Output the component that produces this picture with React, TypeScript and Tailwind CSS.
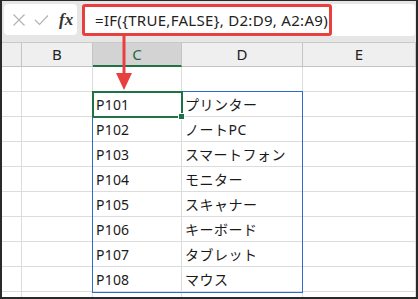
import React from "react";

const COLS = [
  { key: "hdr", label: "", w: "w-[20px]" },
  { key: "B", label: "B", w: "w-[71px]" },
  { key: "C", label: "C", w: "w-[89px]" },
  { key: "D", label: "D", w: "w-[121px]" },
  { key: "E", label: "E", w: "flex-1" },
];

const ROWS: [string, string][] = [
  ["", ""],
  ["P101", "プリンター"],
  ["P102", "ノートPC"],
  ["P103", "スマートフォン"],
  ["P104", "モニター"],
  ["P105", "スキャナー"],
  ["P106", "キーボード"],
  ["P107", "タブレット"],
  ["P108", "マウス"],
  ["", ""],
];

const FONT = "font-['Noto_Sans','Noto_Sans_CJK_JP',sans-serif]";

export default function App() {
  return (
    <div className={`relative w-[418px] h-[299px] bg-[#2a2a2a] pl-[2px] pt-[1px] pr-[2px] pb-[2px] ${FONT}`}>
      <div className="flex flex-col h-full bg-white overflow-hidden">
        {/* formula bar */}
        <div className="h-[41px] shrink-0 bg-[#e6e6e6] flex items-start pt-[3px] pl-[2px] pr-[1px] gap-[5px]">
          <div className="w-[73px] h-[31px] bg-white rounded-[4px] flex items-center pl-[8px] gap-[8px]">
            <svg width="14" height="14" viewBox="0 0 14 14">
              <path d="M1.5 1.5 L12.5 12.5 M12.5 1.5 L1.5 12.5" stroke="#b3b3b3" strokeWidth="1.2" fill="none" />
            </svg>
            <svg width="15" height="12" viewBox="0 0 15 12">
              <path d="M1 6 L5.5 10.5 L14 1.5" stroke="#b3b3b3" strokeWidth="1.2" fill="none" />
            </svg>
            <span className="font-['Liberation_Serif',serif] italic font-bold text-[17px] text-[#333] leading-none ml-[2px]">
              fx
            </span>
          </div>
          <div className="flex-1 h-[32px] bg-white rounded-[3px] flex">
            <div className="w-[250px] h-full border-[3px] border-[#e8403f] rounded-[3px] flex items-center pl-[10px] text-[15px] tracking-[0.3px] text-[#222] whitespace-nowrap">
              =IF({"{"}TRUE,FALSE{"}"}, D2:D9, A2:A9)
            </div>
          </div>
        </div>

        {/* column headers */}
        <div className="flex h-[25px] shrink-0 border-t border-[#c9c9c9] bg-[#efefef]">
          {COLS.map((c) => (
            <div
              key={c.key}
              className={`${c.w} shrink-0 flex items-center justify-center text-[15px] border-r border-[#c4c4c4] ${
                c.key === "C"
                  ? "bg-[#d3d3d3] text-[#1c6b3c] border-b-2 border-b-[#1f7244]"
                  : "text-[#222] border-b border-b-[#c4c4c4]"
              }`}
            >
              {c.label}
            </div>
          ))}
        </div>

        {/* rows */}
        {ROWS.map((r, i) => (
          <div key={i} className="flex h-[25px] shrink-0">
            {COLS.map((c) => (
              <div
                key={c.key}
                className={`${c.w} shrink-0 border-r border-b border-[#dcdcdc] flex items-center pl-[3px] text-[14px] text-[#1a1a1a] whitespace-nowrap`}
              >
                {c.key === "C" ? (
                  <span className="tracking-[0.2px]">{r[0]}</span>
                ) : c.key === "D" ? (
                  <span className="tracking-[0.5px]">{r[1]}</span>
                ) : null}
              </div>
            ))}
          </div>
        ))}
      </div>

      {/* spill range outline */}
      <div className="absolute left-[92px] top-[91px] w-[211px] h-[202px] border border-[#2f6cc9] pointer-events-none" />
      {/* active cell */}
      <div className="absolute left-[92px] top-[91px] w-[91px] h-[27px] border-2 border-[#1f7244] pointer-events-none" />
      <div className="absolute left-[179px] top-[114px] w-[5px] h-[5px] bg-[#1f7244] outline outline-1 outline-white" />

      {/* arrow from formula to cell */}
      <svg className="absolute left-[115px] top-[35px]" width="18" height="56" viewBox="0 0 18 56">
        <rect x="7.5" y="0" width="3" height="39" fill="#e8403f" />
        <polygon points="1,38 17,38 9,55" fill="#e8403f" />
      </svg>
    </div>
  );
}
